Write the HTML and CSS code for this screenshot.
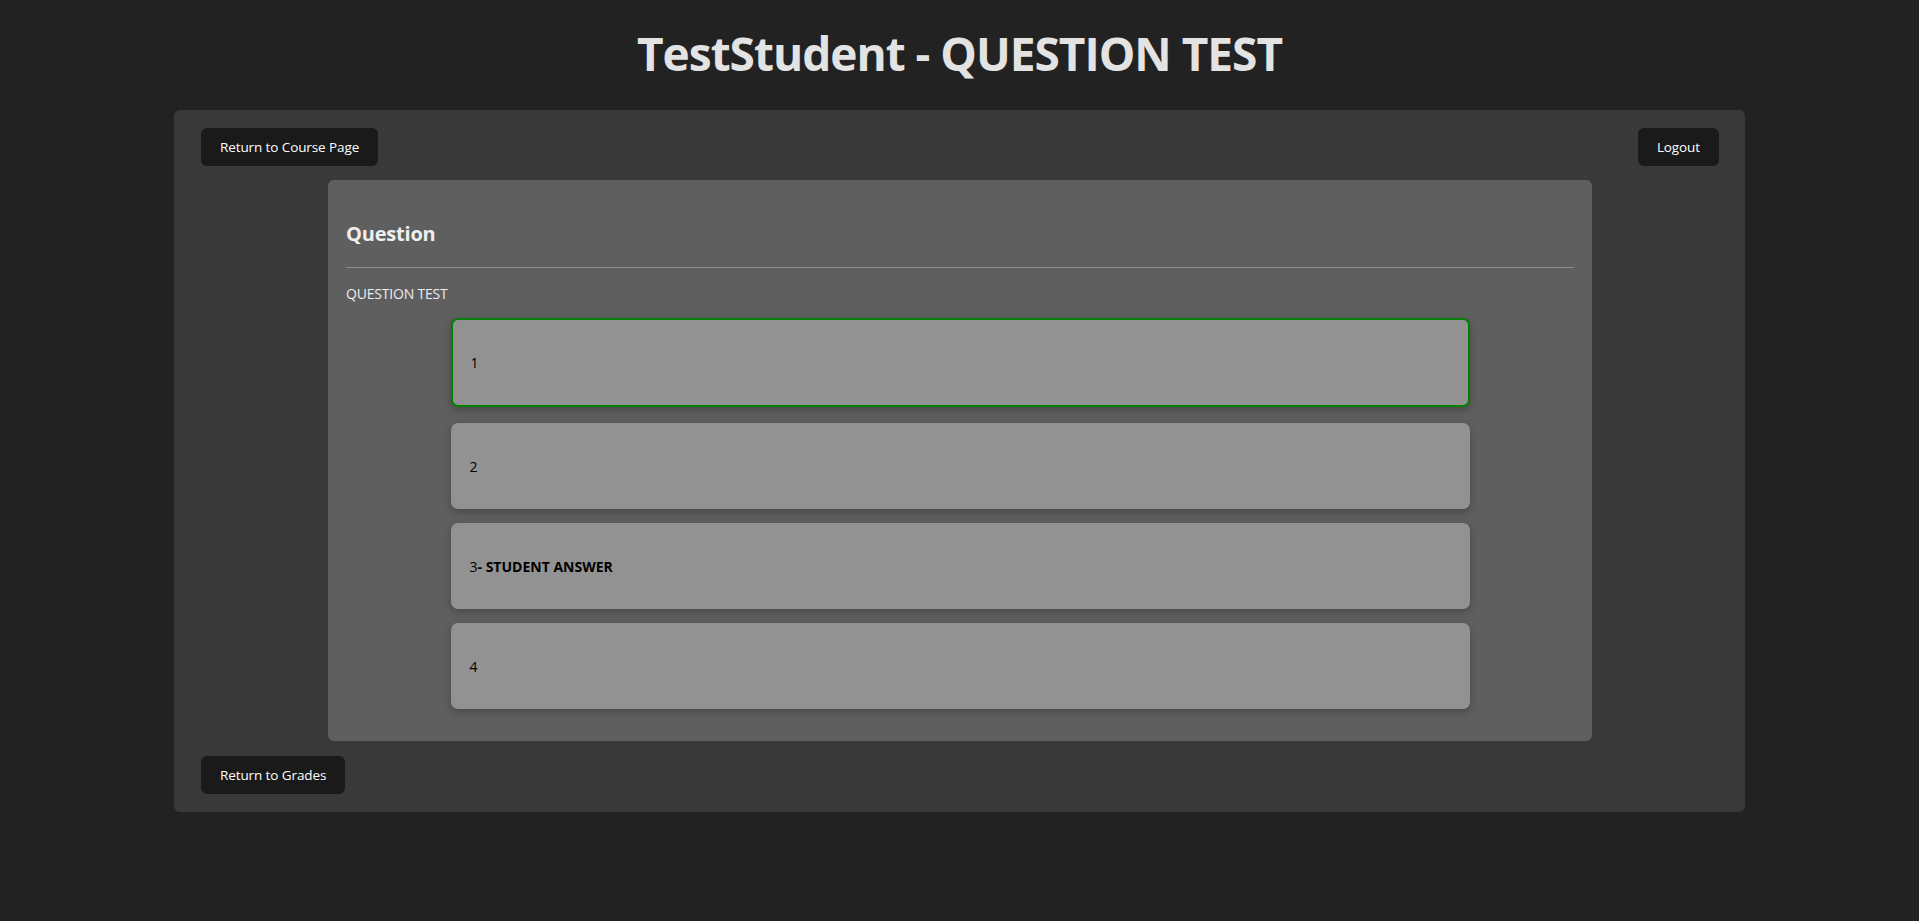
FILE: index.html
```html
<!DOCTYPE html>
<html lang="en">
<head>
<meta charset="utf-8">
<title>TestStudent - QUESTION TEST</title>
<link rel="stylesheet" href="styles.css">
</head>
<body>
<h1 class="page-title">TestStudent - QUESTION TEST</h1>
<div class="container">
  <div class="top-row">
    <button class="btn">Return to Course Page</button>
    <button class="btn">Logout</button>
  </div>
  <div class="card">
    <h2 class="card-title">Question</h2>
    <hr class="divider">
    <p class="question-text">QUESTION TEST</p>
    <div class="options">
      <div class="option option-correct">1</div>
      <div class="option">2</div>
      <div class="option">3<strong>- STUDENT ANSWER</strong></div>
      <div class="option">4</div>
    </div>
  </div>
  <button class="btn">Return to Grades</button>
</div>
</body>
</html>
```

FILE: styles.css
```css
html, body {
  margin: 0;
  padding: 0;
}
body {
  background: #222222;
  font-family: "Open Sans", "Noto Sans", "Liberation Sans", sans-serif;
  color: #e6e6e6;
  min-height: 921px;
}
.page-title {
  margin: 21px 0 25px;
  font-size: 46px;
  line-height: 64px;
  letter-spacing: -1px;
  font-weight: 700;
  text-align: center;
  color: #e3e3e3;
}
.container {
  box-sizing: border-box;
  width: 1571px;
  margin: 0 auto;
  padding: 18px 26px 18px 27px;
  background: #393939;
  border-radius: 6px;
}
.top-row {
  display: flex;
  justify-content: space-between;
}
.btn {
  display: inline-block;
  height: 38px;
  padding: 0 19px;
  border: none;
  border-radius: 6px;
  background: #1a1a1a;
  color: #ffffff;
  font-family: "Open Sans", "Noto Sans", "Liberation Sans", sans-serif;
  font-size: 13.5px;
  letter-spacing: -0.1px;
  line-height: 38px;
  cursor: pointer;
}
.card {
  box-sizing: border-box;
  width: 1264px;
  margin: 14px auto 15px;
  padding: 18px 18px 32px;
  background: #5f5f5f;
  border-radius: 6px;
}
.card-title {
  margin: 22px 0 20px;
  font-size: 20px;
  line-height: 27px;
  letter-spacing: -0.2px;
  font-weight: 700;
  color: #efefef;
}
.divider {
  margin: 0;
  border: none;
  border-top: 1px solid #8c8c8c;
  height: 0;
}
.question-text {
  margin: 16px 0 15px;
  font-size: 14px;
  line-height: 19px;
  letter-spacing: -0.2px;
  color: #ececec;
}
.options {
  width: 1019px;
  margin: 0 auto;
  display: flex;
  flex-direction: column;
  gap: 14px;
}
.option {
  box-sizing: border-box;
  height: 86px;
  display: flex;
  align-items: center;
  padding: 0 19px;
  background: #929292;
  border-radius: 7px;
  box-shadow: 0 3px 8px rgba(0, 0, 0, 0.25);
  color: #000000;
  font-size: 14px;
}
.option strong {
  font-weight: 700;
}
.option-correct {
  height: 89px;
  padding: 0 18px;
  border: 2px solid #008000;
  margin-bottom: 2px;
}
```
